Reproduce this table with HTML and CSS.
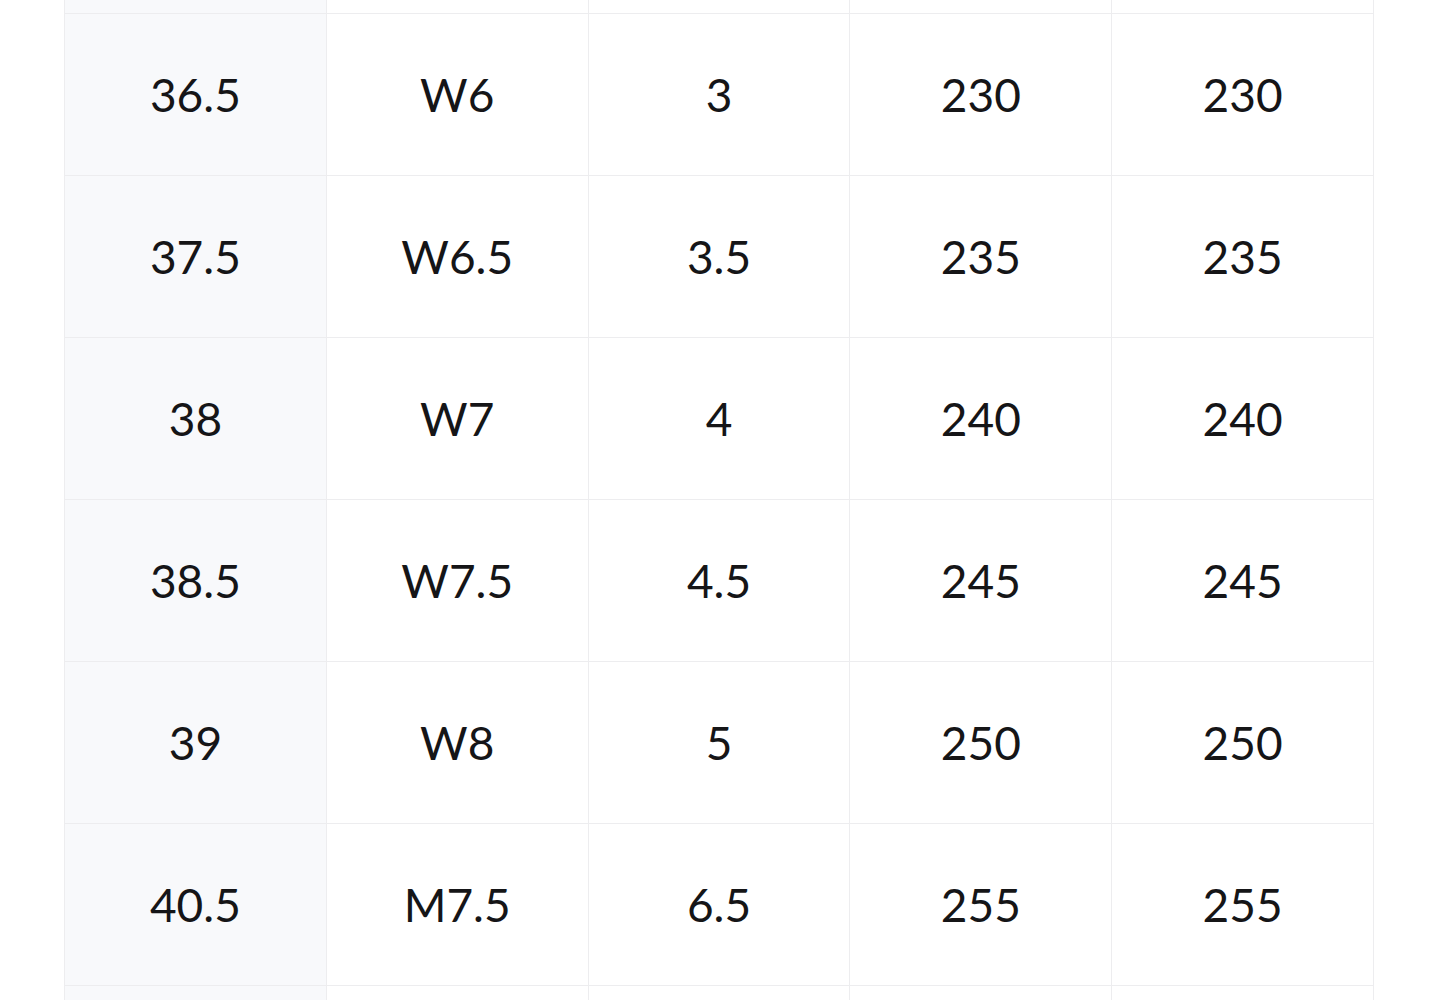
FILE: index.html
```html
<!DOCTYPE html>
<html>
<head>
<meta charset="utf-8">
<link rel="stylesheet" href="styles.css">
</head>
<body>
<div class="wrap">
  <table class="size-table">
    <tbody>
      <tr class="edge-top"><td></td><td></td><td></td><td></td><td></td></tr>
      <tr><td>36.5</td><td>W6</td><td>3</td><td>230</td><td>230</td></tr>
      <tr><td>37.5</td><td>W6.5</td><td>3.5</td><td>235</td><td>235</td></tr>
      <tr><td>38</td><td>W7</td><td>4</td><td>240</td><td>240</td></tr>
      <tr><td>38.5</td><td>W7.5</td><td>4.5</td><td>245</td><td>245</td></tr>
      <tr><td>39</td><td>W8</td><td>5</td><td>250</td><td>250</td></tr>
      <tr><td>40.5</td><td>M7.5</td><td>6.5</td><td>255</td><td>255</td></tr>
      <tr class="edge-bottom"><td></td><td></td><td></td><td></td><td></td></tr>
    </tbody>
  </table>
</div>
</body>
</html>
```
FILE: styles.css
```css
html, body {
  margin: 0;
  padding: 0;
  background: #ffffff;
  overflow: hidden;
}
.wrap {
  padding-left: 64px;
}
.size-table {
  border-collapse: collapse;
  table-layout: fixed;
  width: 1310px;
  font-family: Lato, "Noto Sans", sans-serif;
  font-size: 46px;
  color: #151517;
}
.size-table td {
  height: 161px;
  padding: 0;
  text-align: center;
  vertical-align: middle;
  border: 1px solid #ededef;
  background: #ffffff;
}
.size-table td:first-child {
  background: #f8f9fb;
}
.size-table .edge-top td {
  height: 13px;
  border-top: none;
}
.size-table .edge-bottom td {
  height: 40px;
}
```
